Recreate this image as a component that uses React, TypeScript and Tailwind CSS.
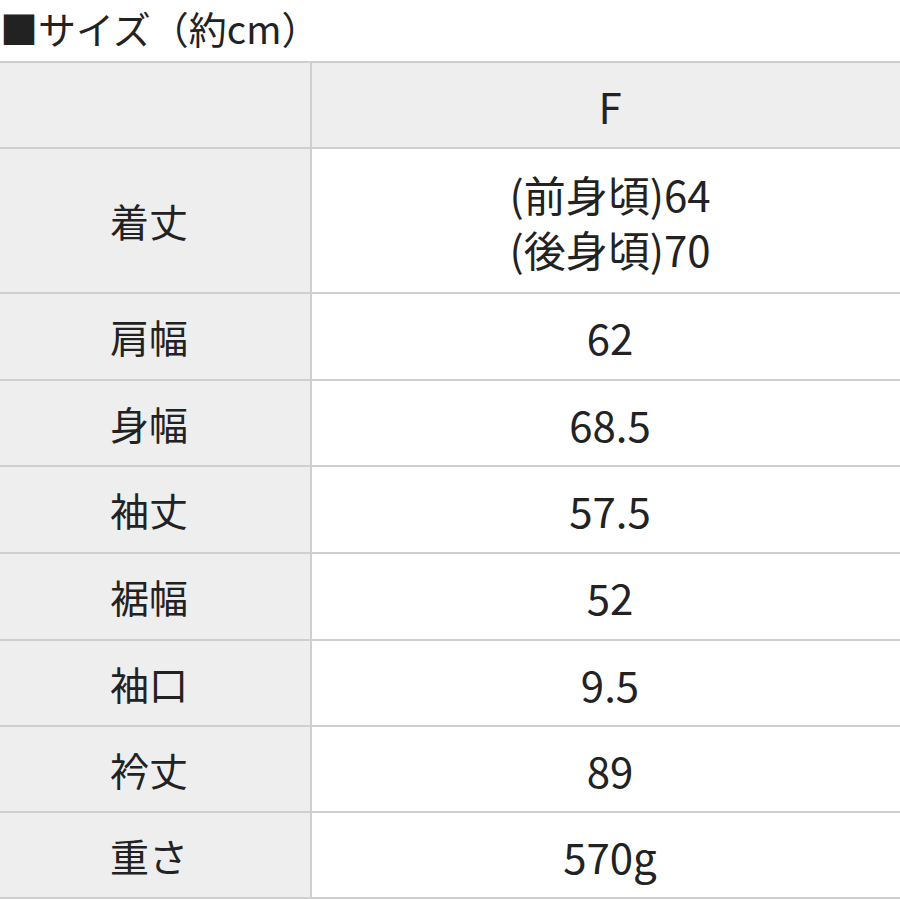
const ROWS: { label: string; value: string[]; h: string }[] = [
  { label: "着丈", value: ["(前身頃)64", "(後身頃)70"], h: "h-[145px]" },
  { label: "肩幅", value: ["62"], h: "h-[87px]" },
  { label: "身幅", value: ["68.5"], h: "h-[86px]" },
  { label: "袖丈", value: ["57.5"], h: "h-[87px]" },
  { label: "裾幅", value: ["52"], h: "h-[87px]" },
  { label: "袖口", value: ["9.5"], h: "h-[86px]" },
  { label: "衿丈", value: ["89"], h: "h-[86px]" },
  { label: "重さ", value: ["570g"], h: "h-[86px]" },
];

const cell = "flex flex-col items-center justify-center border-b-2 border-[#cfcfcf]";

export default function App() {
  return (
    <div
      className="w-[900px] h-[900px] overflow-hidden bg-white text-[#222222]"
      style={{ fontFamily: '"Noto Sans CJK JP", "Noto Sans", sans-serif' }}
    >
      <div className="h-[61px] flex items-center">
        <h2 className="text-[38px] leading-none pb-[6px] whitespace-nowrap">■サイズ（約cm）</h2>
      </div>

      <div className="grid grid-cols-[312px_1fr] border-t-2 border-[#cfcfcf] leading-[55px]">
        <div className={`${cell} h-[86px] bg-[#eeeeee] border-r-2`} />
        <div className={`${cell} h-[86px] bg-[#eeeeee] text-[42px] pl-[8px]`}>F</div>

        {ROWS.map((r) => (
          <Row key={r.label} label={r.label} value={r.value} h={r.h} />
        ))}
      </div>
    </div>
  );
}

function Row({ label, value, h }: { label: string; value: string[]; h: string }) {
  return (
    <>
      <div className={`${cell} ${h} bg-[#eeeeee] border-r-2 text-[39px] pr-[12px]`}>{label}</div>
      <div className={`${cell} ${h} bg-white text-[42px] pl-[8px]`}>
        {value.map((v) => (
          <span key={v}>{v}</span>
        ))}
      </div>
    </>
  );
}
